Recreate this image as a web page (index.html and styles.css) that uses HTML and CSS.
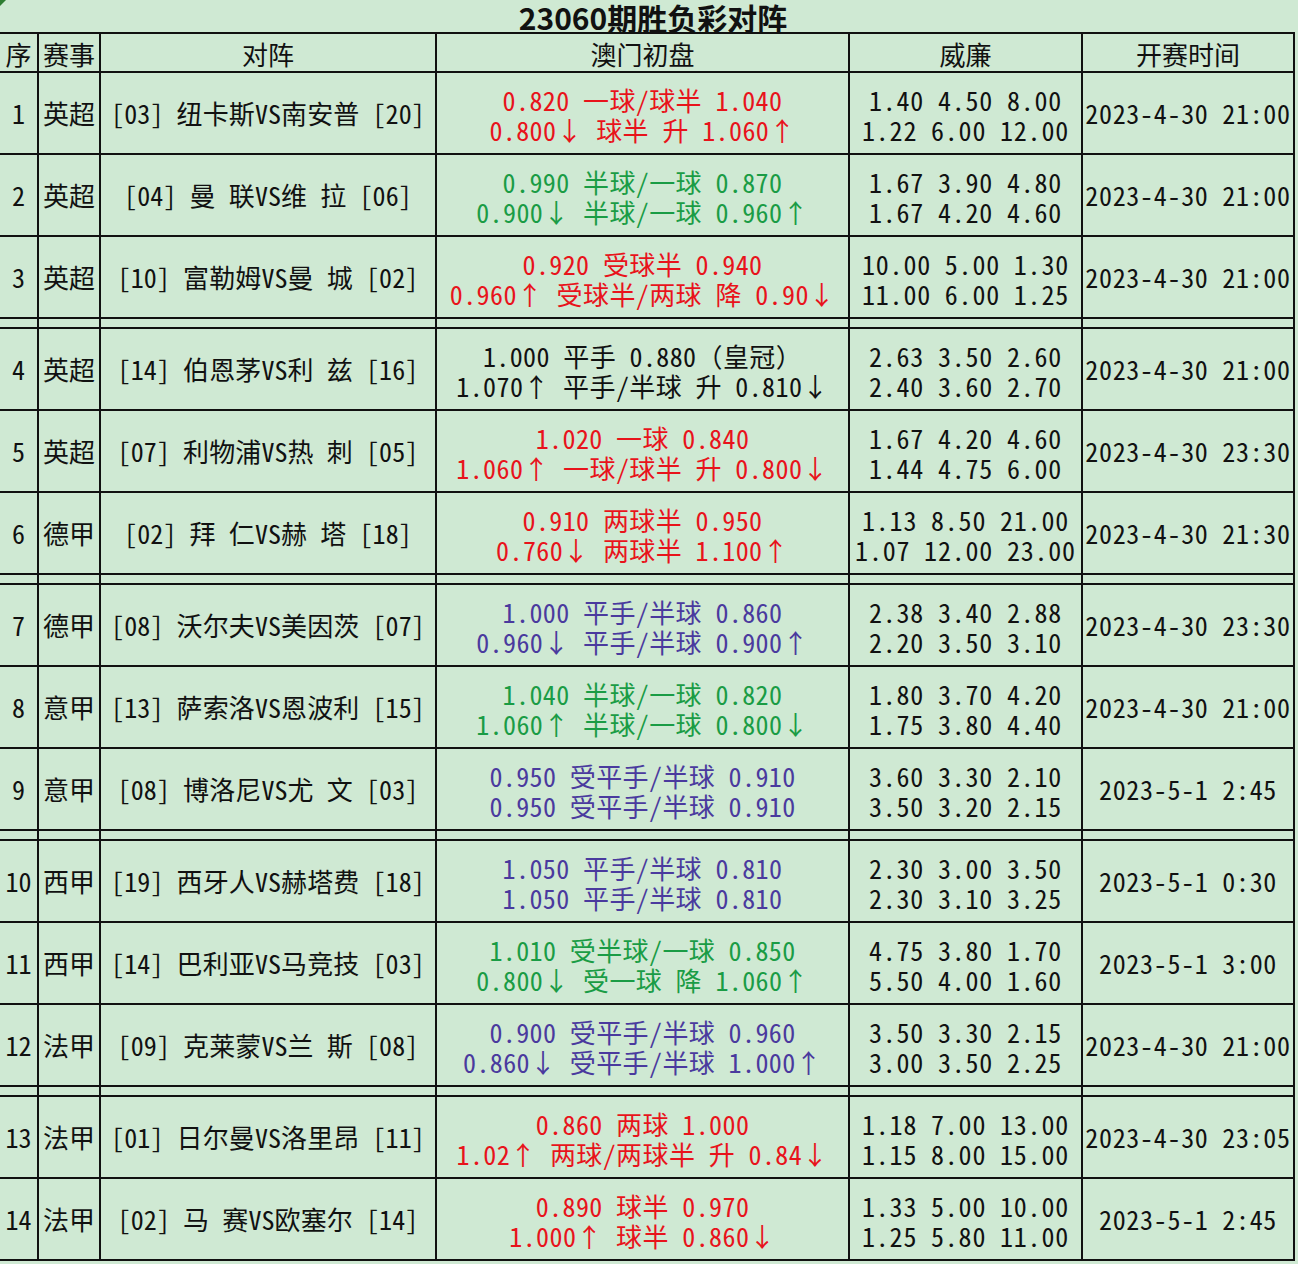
FILE: index.html
```html
<!DOCTYPE html>
<html lang="zh-CN">
<head>
<meta charset="utf-8">
<title>23060期胜负彩对阵</title>
<link rel="stylesheet" href="styles.css">
</head>
<body>
<div class="sheet">
  <div class="title">23060期胜负彩对阵</div>
  <div class="grid">
    <div class="c h">序</div><div class="c h">赛事</div><div class="c h">对阵</div><div class="c h">澳门初盘</div><div class="c h">威廉</div><div class="c h">开赛时间</div>

    <div class="c no">1</div><div class="c lg">英超</div><div class="c vs">[03] 纽卡斯VS南安普 [20]</div><div class="c od red"><p>0.820 一球/球半 1.040<br>0.800↓ 球半 升 1.060↑</p></div><div class="c wl"><p>1.40 4.50 8.00<br>1.22 6.00 12.00</p></div><div class="c tm">2023-4-30 21:00</div>

    <div class="c no">2</div><div class="c lg">英超</div><div class="c vs">[04] 曼 联VS维 拉 [06]</div><div class="c od green"><p>0.990 半球/一球 0.870<br>0.900↓ 半球/一球 0.960↑</p></div><div class="c wl"><p>1.67 3.90 4.80<br>1.67 4.20 4.60</p></div><div class="c tm">2023-4-30 21:00</div>

    <div class="c no">3</div><div class="c lg">英超</div><div class="c vs">[10] 富勒姆VS曼 城 [02]</div><div class="c od red"><p>0.920 受球半 0.940<br>0.960↑ 受球半/两球 降 0.90↓</p></div><div class="c wl"><p>10.00 5.00 1.30<br>11.00 6.00 1.25</p></div><div class="c tm">2023-4-30 21:00</div>

    <div class="c sep"></div><div class="c sep"></div><div class="c sep"></div><div class="c sep"></div><div class="c sep"></div><div class="c sep"></div>

    <div class="c no">4</div><div class="c lg">英超</div><div class="c vs">[14] 伯恩茅VS利 兹 [16]</div><div class="c od"><p>1.000 平手 0.880（皇冠）<br>1.070↑ 平手/半球 升 0.810↓</p></div><div class="c wl"><p>2.63 3.50 2.60<br>2.40 3.60 2.70</p></div><div class="c tm">2023-4-30 21:00</div>

    <div class="c no">5</div><div class="c lg">英超</div><div class="c vs">[07] 利物浦VS热 刺 [05]</div><div class="c od red"><p>1.020 一球 0.840<br>1.060↑ 一球/球半 升 0.800↓</p></div><div class="c wl"><p>1.67 4.20 4.60<br>1.44 4.75 6.00</p></div><div class="c tm">2023-4-30 23:30</div>

    <div class="c no">6</div><div class="c lg">德甲</div><div class="c vs">[02] 拜 仁VS赫 塔 [18]</div><div class="c od red"><p>0.910 两球半 0.950<br>0.760↓ 两球半 1.100↑</p></div><div class="c wl"><p>1.13 8.50 21.00<br>1.07 12.00 23.00</p></div><div class="c tm">2023-4-30 21:30</div>

    <div class="c sep"></div><div class="c sep"></div><div class="c sep"></div><div class="c sep"></div><div class="c sep"></div><div class="c sep"></div>

    <div class="c no">7</div><div class="c lg">德甲</div><div class="c vs">[08] 沃尔夫VS美因茨 [07]</div><div class="c od purple"><p>1.000 平手/半球 0.860<br>0.960↓ 平手/半球 0.900↑</p></div><div class="c wl"><p>2.38 3.40 2.88<br>2.20 3.50 3.10</p></div><div class="c tm">2023-4-30 23:30</div>

    <div class="c no">8</div><div class="c lg">意甲</div><div class="c vs">[13] 萨索洛VS恩波利 [15]</div><div class="c od green"><p>1.040 半球/一球 0.820<br>1.060↑ 半球/一球 0.800↓</p></div><div class="c wl"><p>1.80 3.70 4.20<br>1.75 3.80 4.40</p></div><div class="c tm">2023-4-30 21:00</div>

    <div class="c no">9</div><div class="c lg">意甲</div><div class="c vs">[08] 博洛尼VS尤 文 [03]</div><div class="c od purple"><p>0.950 受平手/半球 0.910<br>0.950 受平手/半球 0.910</p></div><div class="c wl"><p>3.60 3.30 2.10<br>3.50 3.20 2.15</p></div><div class="c tm">2023-5-1 2:45</div>

    <div class="c sep"></div><div class="c sep"></div><div class="c sep"></div><div class="c sep"></div><div class="c sep"></div><div class="c sep"></div>

    <div class="c no">10</div><div class="c lg">西甲</div><div class="c vs">[19] 西牙人VS赫塔费 [18]</div><div class="c od purple"><p>1.050 平手/半球 0.810<br>1.050 平手/半球 0.810</p></div><div class="c wl"><p>2.30 3.00 3.50<br>2.30 3.10 3.25</p></div><div class="c tm">2023-5-1 0:30</div>

    <div class="c no">11</div><div class="c lg">西甲</div><div class="c vs">[14] 巴利亚VS马竞技 [03]</div><div class="c od green"><p>1.010 受半球/一球 0.850<br>0.800↓ 受一球 降 1.060↑</p></div><div class="c wl"><p>4.75 3.80 1.70<br>5.50 4.00 1.60</p></div><div class="c tm">2023-5-1 3:00</div>

    <div class="c no">12</div><div class="c lg">法甲</div><div class="c vs">[09] 克莱蒙VS兰 斯 [08]</div><div class="c od purple"><p>0.900 受平手/半球 0.960<br>0.860↓ 受平手/半球 1.000↑</p></div><div class="c wl"><p>3.50 3.30 2.15<br>3.00 3.50 2.25</p></div><div class="c tm">2023-4-30 21:00</div>

    <div class="c sep"></div><div class="c sep"></div><div class="c sep"></div><div class="c sep"></div><div class="c sep"></div><div class="c sep"></div>

    <div class="c no">13</div><div class="c lg">法甲</div><div class="c vs">[01] 日尔曼VS洛里昂 [11]</div><div class="c od red"><p>0.860 两球 1.000<br>1.02↑ 两球/两球半 升 0.84↓</p></div><div class="c wl"><p>1.18 7.00 13.00<br>1.15 8.00 15.00</p></div><div class="c tm">2023-4-30 23:05</div>

    <div class="c no">14</div><div class="c lg">法甲</div><div class="c vs">[02] 马 赛VS欧塞尔 [14]</div><div class="c od red"><p>0.890 球半 0.970<br>1.000↑ 球半 0.860↓</p></div><div class="c wl"><p>1.33 5.00 10.00<br>1.25 5.80 11.00</p></div><div class="c tm">2023-5-1 2:45</div>
  </div>
</div>
</body>
</html>
```

FILE: styles.css
```css
html, body {
  margin: 0;
  padding: 0;
  background: #cfe9d3;
}
body {
  width: 1298px;
  height: 1264px;
  overflow: hidden;
  font-family: "Noto Sans Mono CJK SC", "Liberation Mono", "Noto Sans CJK SC", monospace;
  font-size: 26px;
  line-height: 30px;
  color: #111;
}
.sheet {
  position: relative;
  width: 1298px;
}
.sheet::before {
  content: "";
  position: absolute;
  left: 0;
  top: 0;
  border-top: 6px solid #2e7d32;
  border-right: 6px solid transparent;
}
.title {
  height: 32px;
  line-height: 32px;
  padding-top: 1px;
  box-sizing: border-box;
  text-align: center;
  font-family: "Noto Sans CJK SC", sans-serif;
  font-weight: 700;
  font-size: 30px;
  color: #111;
  padding-left: 8px;
}
.grid {
  display: grid;
  grid-template-columns: 37px 60px 334px 411px 231px 210px;
  gap: 2px;
  background: #111;
  padding: 2px 2px 2px 0;
  width: 1293px;
}
.c {
  background: #cfe9d3;
  height: 80px;
  display: flex;
  flex-direction: column;
  align-items: center;
  justify-content: center;
  white-space: pre;
}
.c p {
  margin: 0;
  text-align: center;
}
.c.h {
  height: 37px;
  line-height: 30px;
  padding-top: 3px;
  box-sizing: border-box;
}
.c.sep {
  height: 8px;
}
.vs {
  letter-spacing: 0.1px;
}
.od {
  padding-top: 4px;
  box-sizing: border-box;
  letter-spacing: 0.4px;
}
.wl {
  padding-top: 4px;
  box-sizing: border-box;
  letter-spacing: 0.8px;
}
.tm {
  letter-spacing: 0.7px;
}
.red { color: #e8131b; }
.green { color: #1a9c45; }
.purple { color: #4a3a9e; }
```
